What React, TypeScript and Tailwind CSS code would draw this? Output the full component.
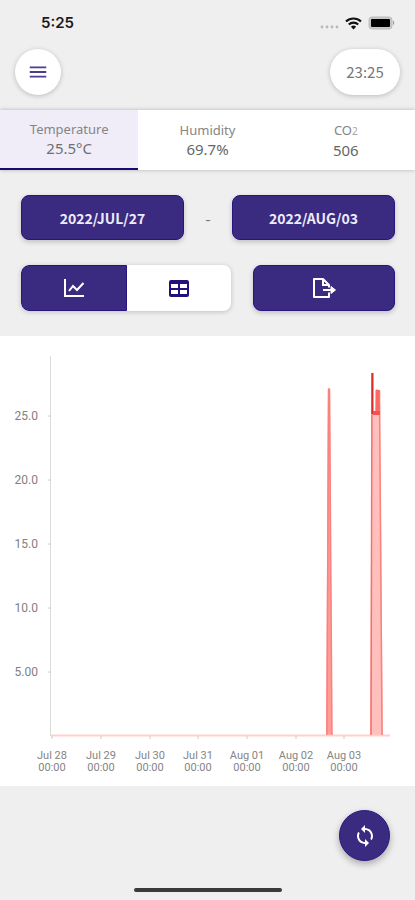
import { MdMenu, MdSync } from "react-icons/md";

const tabs = [
  { label: "Temperature", value: "25.5°C", active: true },
  { label: "Humidity", value: "69.7%", active: false },
  { label: "CO", sub: "2", value: "506", active: false },
];

const yTicks = [
  { label: "25.0", y: 80 },
  { label: "20.0", y: 144 },
  { label: "15.0", y: 208 },
  { label: "10.0", y: 272 },
  { label: "5.00", y: 336 },
];

const xTicks = [
  { label: "Jul 28", x: 52 },
  { label: "Jul 29", x: 101 },
  { label: "Jul 30", x: 150 },
  { label: "Jul 31", x: 198 },
  { label: "Aug 01", x: 247 },
  { label: "Aug 02", x: 296 },
  { label: "Aug 03", x: 344 },
];

function StatusBar() {
  return (
    <div className="flex h-[46px] items-center justify-between pl-[41px] pr-5">
      <span className="font-['Inter'] text-[15px] font-semibold text-[#1a1a1a]">5:25</span>
      <div className="flex items-center gap-1.5">
        <svg width="20" height="12" viewBox="0 0 20 12" fill="#b9b9b9" aria-hidden="true">
          <circle cx="3" cy="10" r="1.4" />
          <circle cx="8" cy="10" r="1.4" />
          <circle cx="13" cy="10" r="1.4" />
          <circle cx="18" cy="10" r="1.4" />
        </svg>
        <svg width="17" height="13" viewBox="0 0 17 13" aria-hidden="true">
          <g fill="none" stroke="#111" strokeWidth="2.1">
            <path d="M1 4.6a10.8 10.8 0 0 1 15 0" />
            <path d="M3.8 7.5a6.8 6.8 0 0 1 9.4 0" />
          </g>
          <path d="M5.9 9.7a3.8 3.8 0 0 1 5.2 0L8.5 12.5z" fill="#111" />
        </svg>
        <svg width="27" height="14" viewBox="0 0 27 14" aria-hidden="true">
          <rect x="1" y="1" width="23" height="12" rx="3" fill="#c9c9c9" stroke="#bbb" />
          <rect x="3" y="3" width="19" height="8" rx="1" fill="#000" />
          <path d="M25 4.8c1.6.6 1.6 3.8 0 4.4z" fill="#999" />
        </svg>
      </div>
    </div>
  );
}

function TabBar() {
  return (
    <div
      role="tablist"
      className="mt-[15px] grid h-[60px] grid-cols-3 bg-white font-['Noto_Sans',sans-serif] shadow-[0_0_4px_rgba(0,0,0,0.25)]"
    >
      {tabs.map((tab) => (
        <button
          key={tab.label}
          role="tab"
          type="button"
          aria-selected={tab.active}
          className={
            tab.active
              ? "flex flex-col items-center justify-center border-b-2 border-[#1a0a70] bg-[#f0edf9] text-[#707070]"
              : "flex flex-col items-center justify-center text-[#666]"
          }
        >
          <span className="text-[13px] leading-[19px] text-[#858585]">
            {tab.label}
            {tab.sub && <span className="text-[10px] text-[#a5a5a5]">{tab.sub}</span>}
          </span>
          <span className="text-[15px] leading-[19px]">{tab.value}</span>
        </button>
      ))}
    </div>
  );
}

function DateButton({ children }: { children: string }) {
  return (
    <button
      type="button"
      className="h-[45px] flex-1 rounded-lg border border-[#2a1580] bg-[#3b2b80] text-sm font-bold text-[#eeebff] shadow-[0_2px_5px_rgba(0,0,0,0.2)]"
    >
      {children}
    </button>
  );
}

function Controls() {
  return (
    <div className="pt-[25px] pr-5 pb-[25px] pl-[21px]">
      <div className="flex items-center">
        <DateButton>2022/JUL/27</DateButton>
        <span className="w-12 text-center text-base text-[#777]">-</span>
        <DateButton>2022/AUG/03</DateButton>
      </div>

      <div className="mt-[25px] flex gap-[22px]">
        <div className="flex h-[46px] flex-[3] overflow-hidden rounded-lg bg-white shadow-[0_1px_5px_rgba(0,0,0,0.2)]">
          <button
            type="button"
            aria-label="Chart view"
            className="flex flex-1 items-center justify-center rounded-l-lg border border-[#2a1580] bg-[#3b2b80] text-white"
          >
            <svg width="24" height="24" viewBox="0 0 24 24" fill="none" stroke="currentColor" strokeWidth="2">
              <path d="M3 3v17h19" />
              <path d="M7 15l4-5 4 4 6.5-7" />
            </svg>
          </button>
          <button type="button" aria-label="Table view" className="flex flex-1 items-center justify-center text-[#24107a]">
            <svg width="24" height="24" viewBox="0 0 24 24" fill="currentColor">
              <path
                fillRule="evenodd"
                d="M4 4h16a2 2 0 0 1 2 2v13a2 2 0 0 1-2 2H4a2 2 0 0 1-2-2V6a2 2 0 0 1 2-2zM4 8v4h7V8zM13 8v4h7V8zM4 14v4h7v-4zM13 14v4h7v-4z"
              />
            </svg>
          </button>
        </div>
        <button
          type="button"
          aria-label="Export"
          className="flex h-[46px] flex-[2] items-center justify-center rounded-lg border border-[#2a1580] bg-[#3b2b80] text-white shadow-[0_2px_5px_rgba(0,0,0,0.2)]"
        >
          <svg width="26" height="24" viewBox="0 0 26 24" fill="none" stroke="currentColor" strokeWidth="2">
            <path d="M18 16.5V21H3V3h9l6 6v2.5" strokeLinejoin="round" />
            <path d="M12 3v6h6" />
            <path d="M12 14h9" />
            <path d="M20 10.5l4.5 3.5-4.5 3.5z" fill="currentColor" strokeWidth="1" />
          </svg>
        </button>
      </div>
    </div>
  );
}

function TemperatureChart() {
  return (
    <div className="bg-white">
      <svg
        viewBox="0 0 415 450"
        className="block w-full font-['Roboto',sans-serif]"
        role="img"
        aria-label="Temperature from Jul 28 to Aug 03"
      >
        {/* axes */}
        <path d="M50.5 20V400" stroke="#dcdcdc" />
        {yTicks.map((t) => (
          <g key={t.label}>
            <path d={`M48 ${t.y}h3`} stroke="#ccc" />
            <text x="38" y={t.y + 4} textAnchor="end" fontSize="12" fill="#808080">
              {t.label}
            </text>
          </g>
        ))}

        {/* series */}
        <path d="M326 399L328 53h2L332 399z" fill="#ff9c98" />
        <path d="M370 399L372 37l1 40h2l1-24h2l2 24L383 399z" fill="#ffbfbd" />
        <path d="M51 399.5H390" stroke="#ffcfcd" strokeWidth="2" />
        <g fill="none" strokeWidth="1.5" strokeLinejoin="round">
          <path d="M327 399L328.5 53h1L332 399" stroke="#fb817c" />
          <path d="M371 399L372 37" stroke="#f86f6a" />
          <path d="M379.5 54L382 399" stroke="#fb817c" />
        </g>
        <path d="M372.5 37V78" stroke="#dc2a25" strokeWidth="2" />
        <path d="M377.5 54V79" stroke="#fa6964" strokeWidth="4" />
        <path d="M373 77H380" stroke="#f5524d" strokeWidth="4" />

        {xTicks.map((t) => (
          <g key={t.label}>
            <path d={`M${t.x} 400v3`} stroke="#ccc" />
            <text y="423" textAnchor="middle" fontSize="11" fill="#858585">
              <tspan x={t.x}>{t.label}</tspan>
              <tspan x={t.x} dy="12">
                00:00
              </tspan>
            </text>
          </g>
        ))}
      </svg>
    </div>
  );
}

export default function App() {
  return (
    <div className="flex min-h-screen flex-col bg-[#efefef] font-['Noto_Sans_CJK_JP','Noto_Sans',sans-serif]">
      <StatusBar />

      <header className="flex items-center justify-between px-[15px] pt-[3px]">
        <button
          type="button"
          aria-label="Menu"
          className="flex size-[46px] items-center justify-center rounded-full bg-white text-[#4c3d92] shadow-[0_1px_5px_rgba(0,0,0,0.22)]"
        >
          <MdMenu size={22} />
        </button>
        <div className="flex h-[46px] w-[70px] items-center justify-center rounded-full bg-white text-[15px] text-[#777] shadow-[0_1px_5px_rgba(0,0,0,0.22)]">
          23:25
        </div>
      </header>

      <main>
        <TabBar />
        <Controls />
        <TemperatureChart />
      </main>

      <footer className="flex flex-1 flex-col justify-between px-[25px] pt-6 pb-2">
        <button
          type="button"
          aria-label="Refresh"
          className="flex size-[51px] items-center justify-center self-end rounded-full border border-[#2a1580] bg-[#3b2b80] text-white shadow-[0_3px_7px_rgba(0,0,0,0.3)]"
        >
          <MdSync size={24} />
        </button>
        <div className="h-1 w-[148px] self-center rounded-full bg-[#3a3a3a]" />
      </footer>
    </div>
  );
}
